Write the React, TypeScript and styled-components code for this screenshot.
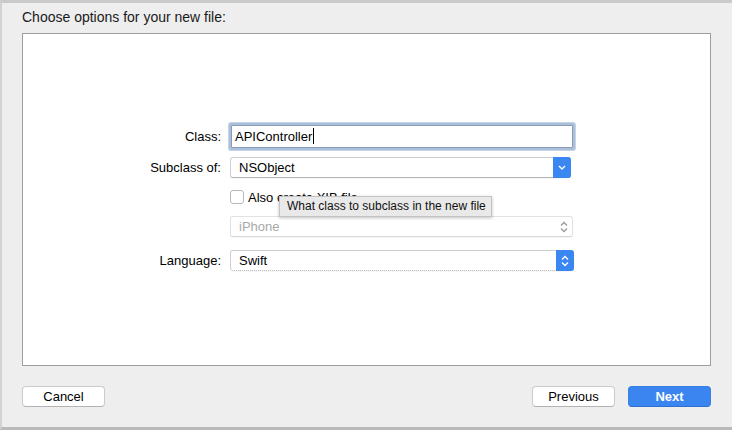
import React from "react";
import styled, { createGlobalStyle } from "styled-components";

const Global = createGlobalStyle`
  html, body { margin: 0; padding: 0; background: #ececec; }
  * { box-sizing: border-box; }
  body { font-family: "Liberation Sans", Arial, sans-serif; font-size: 13px; color: #000; }
`;

const Window = styled.div`
  position: relative;
  width: 732px;
  height: 430px;
  background: #eeeeee;
  border-top: 3px solid #cacaca;
  border-left: 2px solid #d2d2d2;
  border-bottom: 3px solid #b9b9b9;
  display: flex;
  flex-direction: column;
`;

const Title = styled.div`
  height: 30px;
  line-height: 29px;
  padding-left: 20px;
  font-size: 14px;
  color: #1a1a1a;
`;

const Panel = styled.div`
  position: relative;
  margin: 0 21px 0 20px;
  height: 333px;
  background: #ffffff;
  border: 1px solid #9e9e9e;
  padding-top: 88px;
  display: flex;
  flex-direction: column;
`;

const Row = styled.div<{ $h: number; $mt: number }>`
  display: flex;
  align-items: center;
  height: ${(p) => p.$h}px;
  margin-top: ${(p) => p.$mt}px;
`;

const Label = styled.div`
  width: 198px;
  text-align: right;
  font-size: 13px;
  color: #000;
`;

const Control = styled.div`
  margin-left: 9px;
  display: flex;
  align-items: center;
`;

const TextField = styled.div`
  margin-left: 1px;
  width: 342px;
  height: 23px;
  border: 1px solid #8a9bb3;
  box-shadow: 0 0 0 2px #a9bfdc, 0 0 0 3px #c6d4e6;
  border-radius: 1px;
  background: #fff;
  display: flex;
  align-items: center;
  padding-left: 3px;
  font-size: 13px;
`;

const Caret = styled.span`
  display: inline-block;
  width: 1px;
  height: 16px;
  background: #000;
  margin-left: 1px;
`;

const Popup = styled.div<{ $w: number; $disabled?: boolean; $dotted?: boolean }>`
  position: relative;
  width: ${(p) => p.$w}px;
  height: 21px;
  border: 1px solid ${(p) => (p.$disabled ? "#e2e2e2" : "#cfcfcf")};
  border-bottom-color: ${(p) => (p.$disabled ? "#d6d6d6" : "#b5b5b5")};
  border-bottom-style: ${(p) => (p.$dotted ? "dotted" : "solid")};
  border-radius: 3px;
  background: #fff;
  display: flex;
  align-items: center;
  padding-left: 8px;
  font-size: 13px;
  color: ${(p) => (p.$disabled ? "#a8a8a8" : "#000")};
  box-shadow: 0 1px 1px rgba(0, 0, 0, 0.04);
`;

const PopupButton = styled.div<{ $blue: boolean }>`
  position: absolute;
  right: -1px;
  top: -1px;
  bottom: -1px;
  width: 18px;
  border-radius: 0 3px 3px 0;
  background: ${(p) => (p.$blue ? "#3b87f2" : "transparent")};
  display: flex;
  align-items: center;
  justify-content: center;
`;

const Checkbox = styled.div`
  width: 14px;
  height: 14px;
  border: 1px solid #b9b9b9;
  border-radius: 3px;
  background: #fff;
`;

const CheckLabel = styled.span`
  margin-left: 4px;
  font-size: 13px;
  color: #000;
`;

const Tooltip = styled.div`
  position: absolute;
  left: 256px;
  top: 162px;
  width: 213px;
  height: 21px;
  background: #e9e9e9;
  border: 1px solid #c3c3c3;
  box-shadow: 0 1px 3px rgba(0, 0, 0, 0.25);
  font-size: 12px;
  line-height: 19px;
  padding-left: 7px;
  color: #111;
  white-space: nowrap;
`;

const Footer = styled.div`
  display: flex;
  justify-content: space-between;
  margin: 20px 21px 0 20px;
`;

const ButtonGroup = styled.div`
  display: flex;
  gap: 13px;
`;

const Button = styled.div<{ $primary?: boolean }>`
  width: 83px;
  height: 21px;
  border-radius: 4px;
  display: flex;
  align-items: center;
  justify-content: center;
  font-size: 13px;
  background: ${(p) => (p.$primary ? "#3a85f0" : "#ffffff")};
  color: ${(p) => (p.$primary ? "#ffffff" : "#000")};
  font-weight: ${(p) => (p.$primary ? 700 : 400)};
  border: 1px solid ${(p) => (p.$primary ? "#3a7fe6" : "#cbcbcb")};
  border-bottom-color: ${(p) => (p.$primary ? "#2f6fd0" : "#b3b3b3")};
`;

const ChevronDown = ({ color }: { color: string }) => (
  <svg width="8" height="5" viewBox="0 0 8 5">
    <path d="M1 1 L4 4 L7 1" fill="none" stroke={color} strokeWidth="1.4" />
  </svg>
);

const ChevronUpDown = ({ color }: { color: string }) => (
  <svg width="8" height="12" viewBox="0 0 8 12">
    <path d="M1 4.5 L4 1.5 L7 4.5" fill="none" stroke={color} strokeWidth="1.3" />
    <path d="M1 7.5 L4 10.5 L7 7.5" fill="none" stroke={color} strokeWidth="1.3" />
  </svg>
);

export default function App() {
  return (
    <>
      <Global />
      <Window>
        <Title>Choose options for your new file:</Title>
        <Panel>
          <Row $h={28} $mt={0}>
            <Label>Class:</Label>
            <Control>
              <TextField>
                APIController
                <Caret />
              </TextField>
            </Control>
          </Row>
          <Row $h={21} $mt={7}>
            <Label>Subclass of:</Label>
            <Control>
              <Popup $w={341}>
                NSObject
                <PopupButton $blue>
                  <ChevronDown color="#ffffff" />
                </PopupButton>
              </Popup>
            </Control>
          </Row>
          <Row $h={14} $mt={12}>
            <Label />
            <Control>
              <Checkbox />
              <CheckLabel>Also create XIB file</CheckLabel>
            </Control>
          </Row>
          <Row $h={21} $mt={12}>
            <Label />
            <Control>
              <Popup $w={343} $disabled>
                iPhone
                <PopupButton $blue={false}>
                  <ChevronUpDown color="#9a9a9a" />
                </PopupButton>
              </Popup>
            </Control>
          </Row>
          <Row $h={21} $mt={13}>
            <Label>Language:</Label>
            <Control>
              <Popup $w={344} $dotted>
                Swift
                <PopupButton $blue>
                  <ChevronUpDown color="#ffffff" />
                </PopupButton>
              </Popup>
            </Control>
          </Row>
          <Tooltip>What class to subclass in the new file</Tooltip>
        </Panel>
        <Footer>
          <Button>Cancel</Button>
          <ButtonGroup>
            <Button>Previous</Button>
            <Button $primary>Next</Button>
          </ButtonGroup>
        </Footer>
      </Window>
    </>
  );
}
